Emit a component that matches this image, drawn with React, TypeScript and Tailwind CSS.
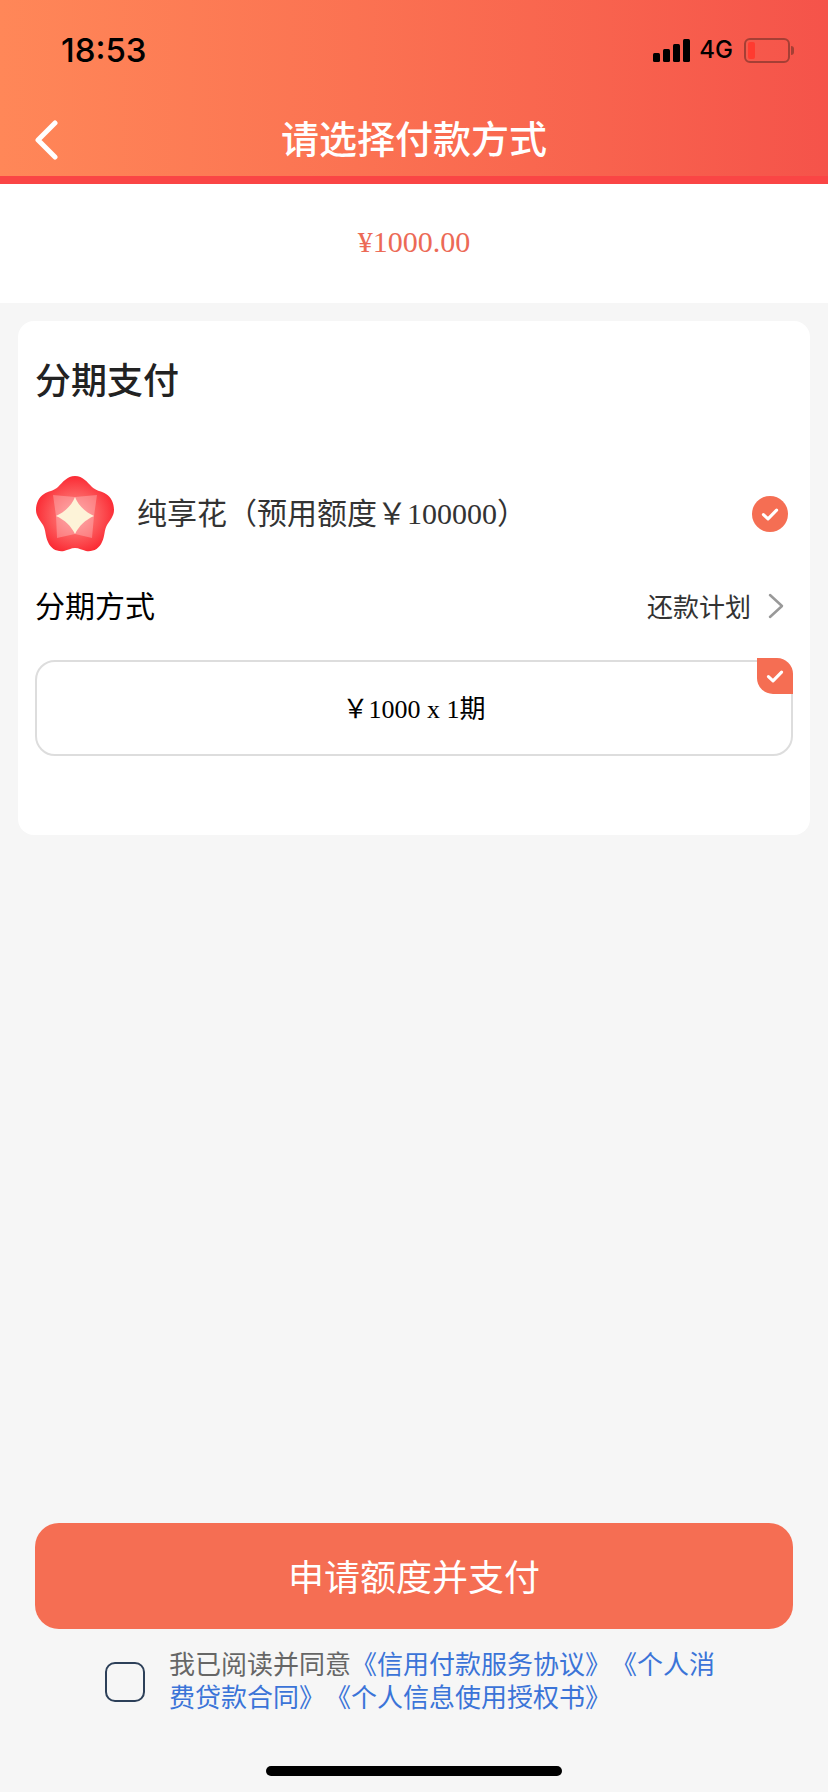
function Flower() {
  return (
    <svg width="78" height="76" viewBox="0 0 78 76" className="shrink-0">
      <defs>
        <radialGradient id="fl" cx="50%" cy="52%" r="54%">
          <stop offset="0%" stopColor="#ff8f8f" />
          <stop offset="55%" stopColor="#fc5a5c" />
          <stop offset="100%" stopColor="#fb2630" />
        </radialGradient>
      </defs>
      <path
        d="M39 0C47 0 51 6 56 11C60 15 66 15 70 18C75 21 78 27 78 34C78 40 74 44 71 49C68 54 69 60 66 66C63 73 57 76 50 75C46 74 43 72 39 72C35 72 32 74 28 75C21 76 15 73 12 66C9 60 10 54 7 49C4 44 0 40 0 34C0 27 3 21 8 18C12 15 18 15 22 11C27 6 31 0 39 0Z"
        fill="url(#fl)"
      />
      <path d="M17 19L39 21L61 19L58 40L56 62L39 58L21 62L20 40Z" fill="#ffffff" fillOpacity="0.26" />
      <path d="M39 21C42 29 49 36 58 40C49 44 43 50 39 58C35 50 29 44 20 40C29 36 36 29 39 21Z" fill="#fdf3d8" />
    </svg>
  );
}

function StatusIcons() {
  return (
    <div className="flex items-center">
      <div className="flex items-end gap-[3px]">
        <div className="w-[7px] h-[9px] bg-black rounded-[1.5px]" />
        <div className="w-[7px] h-[13px] bg-black rounded-[1.5px]" />
        <div className="w-[7px] h-[18px] bg-black rounded-[1.5px]" />
        <div className="w-[7px] h-[23px] bg-black rounded-[1.5px]" />
      </div>
      <span className="ml-[9px] text-[24px] leading-none font-medium font-['Inter',sans-serif] text-black">4G</span>
      <div className="ml-[11px] flex items-center">
        <div className="w-[46px] h-[25px] rounded-[6px] border-2 border-[#a53f35] p-[2px]">
          <div className="w-[7px] h-full rounded-[2px] bg-[#ff3b30]" />
        </div>
        <div className="w-[3px] h-[9px] ml-[1px] bg-[#a53f35] rounded-r-[3px]" />
      </div>
    </div>
  );
}

function Check({ className }: { className?: string }) {
  return (
    <svg viewBox="0 0 20 20" className={className} fill="none" stroke="#fff" strokeWidth="2.8" strokeLinecap="round" strokeLinejoin="round">
      <path d="M4 10.5L8.2 14.5L16 6.5" />
    </svg>
  );
}

export default function App() {
  return (
    <div className="w-[828px] h-[1792px] bg-[#f6f6f6] flex flex-col overflow-hidden font-['Noto_Sans_CJK_SC',sans-serif]">
      <header className="h-[184px] shrink-0 flex flex-col border-b-8 border-[#fa4545] bg-gradient-to-r from-[#ff8758] to-[#f5534a]">
        <div className="h-[100px] flex items-center justify-between pl-[61px] pr-[34px]">
          <span className="text-[33px] leading-none font-medium text-black font-['Inter',sans-serif]">18:53</span>
          <StatusIcons />
        </div>
        <div className="relative flex-1 flex items-center justify-center pb-[2px]">
          <svg width="24" height="40" viewBox="0 0 24 40" fill="none" stroke="#fff" strokeWidth="5" strokeLinecap="round" strokeLinejoin="round" className="absolute left-[34px] top-[20px]">
            <path d="M21 3L4 20L21 37" />
          </svg>
          <h1 className="text-[38px] leading-none font-medium text-white">请选择付款方式</h1>
        </div>
      </header>

      <div className="h-[119px] shrink-0 bg-white flex items-center justify-center text-[30px] text-[#ec6a56] pb-[4px] font-['Liberation_Serif',serif]">
        ¥1000.00
      </div>

      <section className="mx-[18px] mt-[18px] h-[514px] shrink-0 bg-white rounded-[16px] px-[18px] pt-[33px]">
        <h2 className="text-[36px] leading-[48px] font-medium text-[#222] -ml-[1px]">分期支付</h2>
        <div className="mt-[74px] flex items-center">
          <Flower />
          <span className="ml-[23px] text-[30px] leading-[40px] text-[#333] font-['Liberation_Serif','Noto_Sans_CJK_SC',serif]">
            纯享花（预用额度￥100000）
          </span>
          <div className="ml-auto mr-[4px] w-[36px] h-[36px] rounded-full bg-[#f56e53] flex items-center justify-center">
            <Check className="w-[22px] h-[22px]" />
          </div>
        </div>
        <div className="mt-[30px] flex items-center justify-between">
          <span className="text-[30px] leading-[44px] mb-[4px] -ml-[1px] text-black">分期方式</span>
          <div className="flex items-center">
            <span className="text-[26px] leading-[44px] text-[#333]">还款计划</span>
            <svg width="16" height="26" viewBox="0 0 16 26" fill="none" stroke="#999" strokeWidth="2.5" strokeLinecap="round" strokeLinejoin="round" className="ml-[17px] mr-[8px]">
              <path d="M2 2L14 13L2 24" />
            </svg>
          </div>
        </div>
        <div className="relative mt-[30px] ml-[-1px] w-[758px] h-[96px] rounded-[20px] border-2 border-[#dddddd] flex items-center justify-center pt-[2px] text-[26px] text-black font-['Liberation_Serif','Noto_Sans_CJK_SC',serif]">
          ￥1000 x 1期
          <div className="absolute right-[-2px] top-[-4px] w-[36px] h-[36px] bg-[#f56e53] rounded-tr-[16px] rounded-bl-[16px] flex items-center justify-center">
            <Check className="w-[22px] h-[22px]" />
          </div>
        </div>
      </section>

      <div className="mt-auto px-[35px]">
        <button className="w-[758px] h-[106px] rounded-[24px] bg-[#f56e53] text-white text-[36px] pb-[2px]">申请额度并支付</button>
        <div className="mt-[17px] flex items-center pl-[70px]">
          <div className="w-[40px] h-[40px] shrink-0 rounded-[10px] border-[2.5px] border-[#2d4059] bg-[#f6f6f6]" />
          <p className="ml-[24px] mb-[6px] w-[560px] text-[26px] leading-[33px] text-[#666] [text-spacing-trim:space-all]">
            我已阅读并同意<span className="text-[#3b74d8]">《信用付款服务协议》《个人消费贷款合同》《个人信息使用授权书》</span>
          </p>
        </div>
        <div className="mt-[48px] mb-[16px] mx-auto w-[296px] h-[10px] rounded-full bg-black" />
      </div>
    </div>
  );
}
